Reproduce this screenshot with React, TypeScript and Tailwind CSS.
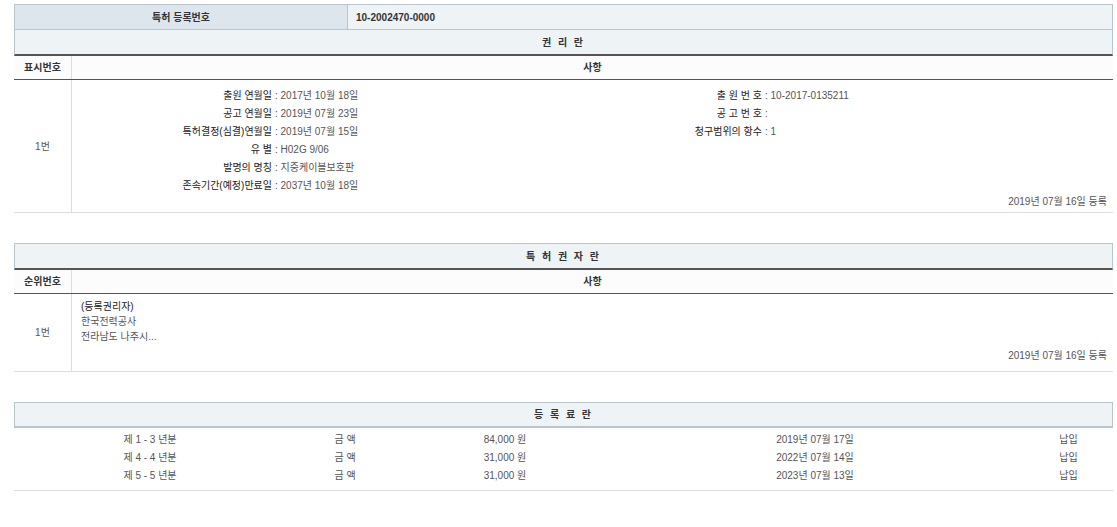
const font = { fontFamily: '"Liberation Sans", "Noto Sans CJK KR", sans-serif' };

const rightsLeft = [
  ["출원 연월일", "2017년 10월 18일"],
  ["공고 연월일", "2019년 07월 23일"],
  ["특허결정(심결)연월일", "2019년 07월 15일"],
  ["유 별", "H02G 9/06"],
  ["발명의 명칭", "지중케이블보호판"],
  ["존속기간(예정)만료일", "2037년 10월 18일"],
];
const rightsRight = [
  ["출 원 번 호", "10-2017-0135211"],
  ["공 고 번 호", ""],
  ["청구범위의 항수", "1"],
];
const fees = [
  ["제 1 - 3 년분", "84,000 원", "2019년 07월 17일"],
  ["제 4 - 4 년분", "31,000 원", "2022년 07월 14일"],
  ["제 5 - 5 년분", "31,000 원", "2023년 07월 13일"],
];

function SubHead({ left }: { left: string }) {
  return (
    <div className="flex h-[24px] border-b border-b-[#555] bg-[#fcfcfc] font-bold text-[#333]">
      <div className="w-[58px] flex items-center justify-center border-r border-[#ddd]">{left}</div>
      <div className="flex-1 flex items-center justify-center">사항</div>
    </div>
  );
}

export default function App() {
  return (
    <div className="bg-white text-[10px] text-[#555] pl-[14px] pr-[4px] pt-[4px]" style={font}>
      <div className="flex h-[26px] border border-[#b9c5cc]">
        <div className="w-[333px] bg-[#dde6ec] flex items-center justify-center font-bold text-[#333] border-r border-[#b9c5cc]">특허 등록번호</div>
        <div className="flex-1 bg-[#eef3f6] flex items-center pl-[8px] font-bold text-[#333]">10-2002470-0000</div>
      </div>
      <div>
        <div className="h-[26px] flex items-center justify-center bg-[#eef3f6] border-x border-[#b9c5cc] border-b-2 border-b-[#555] font-bold text-[#333] tracking-[2px]">권 리 란</div>
        <SubHead left="표시번호" />
        <div className="flex h-[133px] border-b border-[#ddd]">
          <div className="w-[58px] flex items-center justify-center border-r border-[#ddd]">1번</div>
          <div className="flex-1 flex flex-col pt-[6px] pr-[6px]">
            <div className="flex">
              <div className="w-[520px]">
                {rightsLeft.map(([k, v]) => (
                  <div key={k} className="flex h-[18px] items-center">
                    <span className="w-[200px] text-right text-[#222]">{k}</span>
                    <span className="pl-[3px]">: {v}</span>
                  </div>
                ))}
              </div>
              <div className="flex-1">
                {rightsRight.map(([k, v]) => (
                  <div key={k} className="flex h-[18px] items-center">
                    <span className="w-[170px] text-right text-[#222]">{k}</span>
                    <span className="pl-[3px]">: {v}</span>
                  </div>
                ))}
              </div>
            </div>
            <div className="mt-auto mb-[8px] text-right">2019년 07월 16일 등록</div>
          </div>
        </div>
      </div>

      <div className="mt-[30px]">
        <div className="h-[27px] flex items-center justify-center bg-[#eef3f6] border border-[#b9c5cc] border-b-2 border-b-[#555] font-bold text-[#333] tracking-[2px]">특 허 권 자 란</div>
        <SubHead left="순위번호" />
        <div className="flex h-[78px] border-b border-[#ddd]">
          <div className="w-[58px] flex items-center justify-center border-r border-[#ddd]">1번</div>
          <div className="flex-1 flex flex-col pt-[5px] pl-[9px] pr-[6px]">
            <div className="h-[15px] text-[#222]">(등록권리자)</div>
            <div className="h-[15px]">한국전력공사</div>
            <div className="h-[15px]">전라남도 나주시...</div>
            <div className="mt-auto mb-[8px] text-right">2019년 07월 16일 등록</div>
          </div>
        </div>
      </div>

      <div className="mt-[30px]">
        <div className="h-[26px] flex items-center justify-center bg-[#eef3f6] border border-[#b9c5cc] border-b-2 border-b-[#b9c5cc] font-bold text-[#333] tracking-[2px]">등 록 료 란</div>
        <div className="border-b border-[#ddd] pt-[2px] pb-[6px]">
          {fees.map(([y, amt, d]) => (
            <div key={y} className="flex h-[18px] items-center">
              <div className="w-[272px] text-center">{y}</div>
              <div className="w-[118px] text-center">금 액</div>
              <div className="w-[202px] text-center">{amt}</div>
              <div className="w-[418px] text-center">{d}</div>
              <div className="flex-1 text-center">납입</div>
            </div>
          ))}
        </div>
      </div>
    </div>
  );
}
